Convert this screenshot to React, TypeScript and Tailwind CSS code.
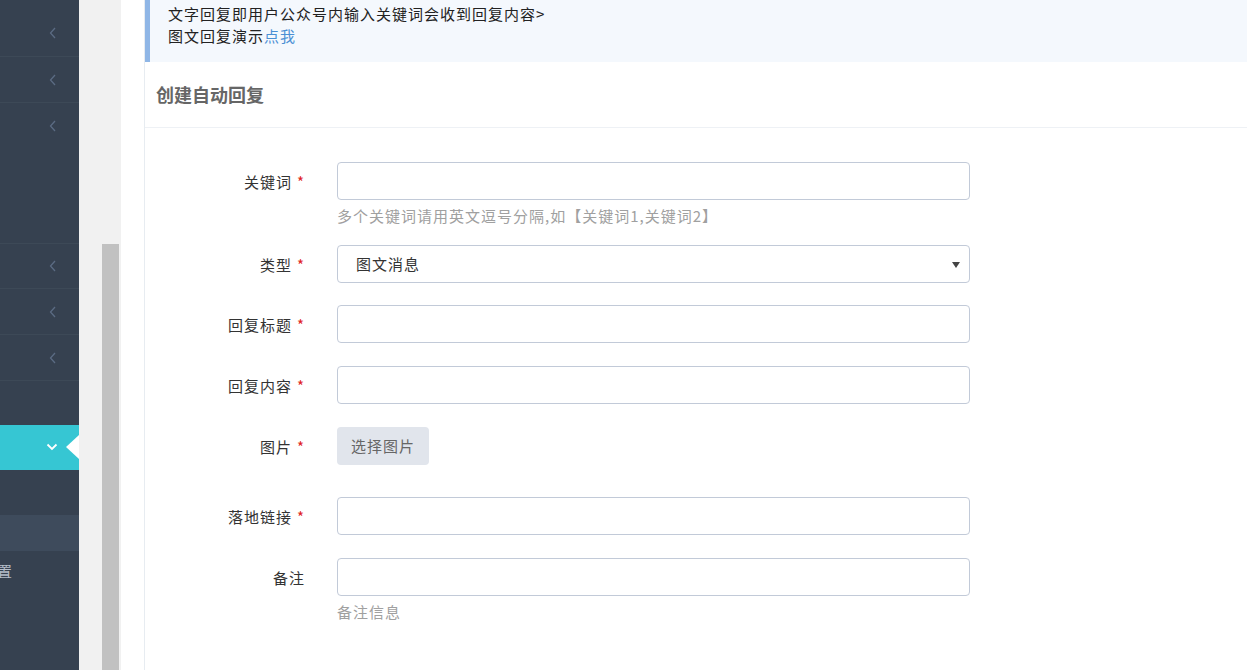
import React from 'react';

const font = { fontFamily: '"Noto Sans CJK SC", "Liberation Sans", sans-serif' };

const Chevron: React.FC = () => (
  <svg width="8" height="12" viewBox="0 0 8 12" className="absolute left-[49px] top-1/2 -translate-y-1/2">
    <polyline points="6,1 1.5,6 6,11" fill="none" stroke="#5b6b83" strokeWidth="1.3" />
  </svg>
);

const NavItem: React.FC<{ h: string; chevron?: boolean; border?: boolean }> = ({
  h,
  chevron = true,
  border = true,
}) => (
  <div className={`relative ${h} ${border ? 'border-b border-[#3d4957]' : ''}`}>{chevron && <Chevron />}</div>
);

const Label: React.FC<{ text: string; required?: boolean }> = ({ text, required }) => (
  <div className="w-[160px] shrink-0 text-right text-[15px] tracking-[1px] text-[#333] h-[38px] leading-[40px]">
    {text}
    {required && <span className="text-[#e02222] ml-[5px]">*</span>}
  </div>
);

const Input: React.FC = () => (
  <div className="w-[633px] h-[38px] rounded-[4px] border border-[#c2cad8] bg-white" />
);

const Row: React.FC<{ label: string; required?: boolean; help?: string; mb?: string; children: React.ReactNode }> = ({
  label,
  required,
  help,
  mb = 'mb-[23px]',
  children,
}) => (
  <div className={`flex ${mb}`}>
    <Label text={label} required={required} />
    <div className="ml-[32px]">
      {children}
      {help && (
        <div className="mt-[5px] text-[15px] tracking-[1px] leading-[22px] text-[#a0a0a0]">{help}</div>
      )}
    </div>
  </div>
);

export default function App() {
  return (
    <div className="flex h-[670px] w-[1247px] overflow-hidden bg-white" style={font}>
      {/* sidebar */}
      <aside className="w-[79px] shrink-0 bg-[#364150] overflow-hidden">
        <div className="h-[10px]" />
        <NavItem h="h-[47px]" />
        <NavItem h="h-[46px]" />
        <NavItem h="h-[45px]" border={false} />
        <NavItem h="h-[96px]" chevron={false} />
        <NavItem h="h-[45px]" />
        <NavItem h="h-[46px]" />
        <NavItem h="h-[46px]" />
        <NavItem h="h-[44px]" chevron={false} border={false} />
        <div className="relative h-[45px] bg-[#36c6d3]">
          <svg width="12" height="8" viewBox="0 0 12 8" className="absolute left-[46px] top-[18px]">
            <polyline points="1.5,1.5 6,6 10.5,1.5" fill="none" stroke="#fff" strokeWidth="1.8" />
          </svg>
          <div className="absolute right-0 top-[10px] w-0 h-0 border-y-[12px] border-y-transparent border-r-[13px] border-r-white" />
        </div>
        <div className="h-[45px]" />
        <div className="h-[36px] bg-[#3e4b5c]" />
        <div className="h-[40px] flex items-center text-[15px] text-[#b4bcc8] whitespace-nowrap">
          <span className="-ml-[19px] tracking-[1px]">设置</span>
        </div>
      </aside>

      {/* scroll track */}
      <div className="w-[42px] shrink-0 bg-[#f1f1f1] flex flex-col">
        <div className="h-[244px]" />
        <div className="ml-[23px] w-[17px] flex-1 bg-[#c1c1c1]" />
      </div>

      {/* content */}
      <main className="flex-1 pl-[23px] bg-white">
        <div className="h-full border-l border-[#e7ecf1]">
          <div className="h-[62px] bg-[#f4f8fd] border-l-[5px] border-[#8fb6e6] pl-[18px] pt-[3px] text-[15px] tracking-[1px] leading-[22px] text-[#222]">
            <div>文字回复即用户公众号内输入关键词会收到回复内容&gt;</div>
            <div>
              图文回复演示<span className="text-[#4a8fd4]">点我</span>
            </div>
          </div>

          <div className="h-[66px] border-b border-[#eef1f5] flex items-center pl-[11px]">
            <span className="text-[18px] font-bold text-[#666]">创建自动回复</span>
          </div>

          <div className="pt-[34px]">
            <Row label="关键词" required help="多个关键词请用英文逗号分隔,如【关键词1,关键词2】" mb="mb-[18px]">
              <Input />
            </Row>
            <Row label="类型" required mb="mb-[22px]">
              <div className="relative w-[633px] h-[38px] rounded-[4px] border border-[#c2cad8] bg-white pl-[18px] text-[15px] tracking-[1px] leading-[36px] text-[#333]">
                图文消息
                <svg width="8" height="6" viewBox="0 0 8 6" className="absolute right-[9px] top-[16px]">
                  <polygon points="0,0 8,0 4,6" fill="#444" />
                </svg>
              </div>
            </Row>
            <Row label="回复标题" required>
              <Input />
            </Row>
            <Row label="回复内容" required>
              <Input />
            </Row>
            <Row label="图片" required mb="mb-[32px]">
              <div className="w-[92px] h-[38px] rounded-[4px] bg-[#e1e5ec] text-[#666] text-[15px] tracking-[1px] leading-[38px] text-center">
                选择图片
              </div>
            </Row>
            <Row label="落地链接" required>
              <Input />
            </Row>
            <Row label="备注" help="备注信息">
              <Input />
            </Row>
          </div>
        </div>
      </main>
    </div>
  );
}
